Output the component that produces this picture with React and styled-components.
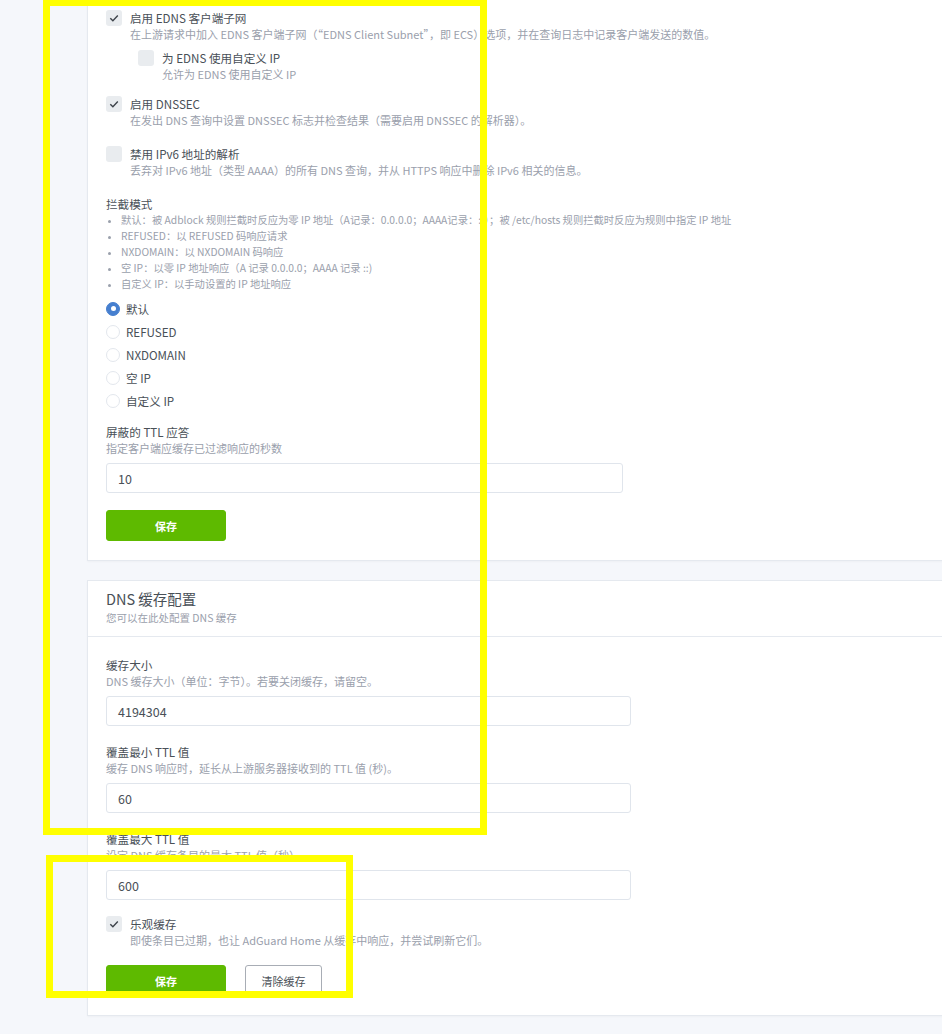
import React from 'react';
import styled, { createGlobalStyle } from 'styled-components';

const GlobalStyle = createGlobalStyle`
  html, body {
    margin: 0;
    padding: 0;
    background: #f5f7fb;
    overflow: hidden;
  }
  body {
    font-family: "Noto Sans CJK SC", "Open Sans", sans-serif;
    color: #495057;
  }
  * { box-sizing: border-box; }
`;

const Page = styled.div`
  position: relative;
  padding-left: 87px;
  min-height: 1034px;
`;

const Card = styled.div`
  background: #fff;
  border: 1px solid rgba(0, 40, 100, 0.1);
  border-right: none;
  border-top: ${props => (props.cut ? 'none' : '1px solid rgba(0, 40, 100, 0.1)')};
  margin-right: -20px;
  margin-top: ${props => props.mt || 0}px;
  box-shadow: 0 1px 2px rgba(0, 0, 0, 0.03);
`;

const CardHeader = styled.div`
  padding: 8px 18px 10px;
  border-bottom: 1px solid rgba(0, 40, 100, 0.1);
`;

const CardTitle = styled.div`
  font-size: 14.5px;
  line-height: 20px;
  color: #495057;
`;

const CardSubtitle = styled.div`
  margin-top: 1px;
  font-size: 10.5px;
  line-height: 16px;
  color: #9aa0ac;
`;

const CardBody = styled.div`
  padding: ${props => props.pt}px 18px 19px;
`;

const CheckGroup = styled.div`
  display: flex;
  align-items: flex-start;
  gap: 8px;
  margin-left: ${props => props.indent || 0}px;
  margin-bottom: ${props => props.mb || 0}px;
`;

const CheckBox = styled.span`
  flex: none;
  width: 16px;
  height: 16px;
  border-radius: 3px;
  background: #e9ecef;
  display: flex;
  align-items: center;
  justify-content: center;
`;

const CheckText = styled.div`
  display: flex;
  flex-direction: column;
`;

const Label = styled.div`
  font-size: 11.6px;
  line-height: 16px;
  color: #495057;
  margin-top: ${props => props.mt || 0}px;
`;

const Desc = styled.div`
  font-size: 11px;
  line-height: 16px;
  color: #9aa0ac;
  white-space: nowrap;
`;

const ModeList = styled.ul`
  margin: 0;
  padding: 0 0 0 15px;
  list-style: disc;
  font-size: 10.3px;
  line-height: 16px;
  color: #9aa0ac;
  white-space: nowrap;

  li::marker {
    font-size: 9px;
  }
`;

const RadioList = styled.div`
  margin-top: 5px;
  display: flex;
  flex-direction: column;
`;

const RadioRow = styled.div`
  display: flex;
  align-items: center;
  gap: 6px;
  height: 23px;
  font-size: 11.6px;
  color: #495057;
`;

const RadioDot = styled.span`
  width: 14px;
  height: 14px;
  border-radius: 50%;
  border: 1px solid ${props => (props.checked ? '#467fcf' : '#e3e7ed')};
  background: ${props => (props.checked ? '#467fcf' : '#fff')};
  display: flex;
  align-items: center;
  justify-content: center;

  &::after {
    content: '';
    display: ${props => (props.checked ? 'block' : 'none')};
    width: 5px;
    height: 5px;
    border-radius: 50%;
    background: #fff;
  }
`;

const Input = styled.div`
  width: ${props => props.w}px;
  height: 30px;
  margin-top: 7px;
  border: 1px solid #e0e5ec;
  border-radius: 3px;
  padding: 0 11px;
  display: flex;
  align-items: center;
  font-size: 12.5px;
  color: #495057;
`;

const Field = styled.div`
  margin-bottom: ${props => props.mb || 0}px;
`;

const Buttons = styled.div`
  display: flex;
  gap: 19px;
  margin-top: 17px;
`;

const Button = styled.button`
  height: 31px;
  width: ${props => props.w}px;
  border-radius: 3px;
  font-family: inherit;
  font-size: 11px;
  font-weight: ${props => (props.primary ? 700 : 400)};
  color: ${props => (props.primary ? '#fff' : '#495057')};
  background: ${props => (props.primary ? '#5eba00' : '#fff')};
  border: 1px solid ${props => (props.primary ? '#5eba00' : '#a8adb5')};
  padding: 0;
`;

const Highlight = styled.div`
  position: absolute;
  border: 7px solid #ffff00;
  pointer-events: none;
`;

const Check = ({ checked }) => (
  <CheckBox>
    {checked && (
      <svg width="12" height="12" viewBox="0 0 12 12">
        <polyline points="2.3,6.2 4.9,8.8 9.8,3.6" fill="none" stroke="#3d434a" strokeWidth="1.4" />
      </svg>
    )}
  </CheckBox>
);

const CheckItem = ({ checked, label, desc, indent, mb }) => (
  <CheckGroup indent={indent} mb={mb}>
    <Check checked={checked} />
    <CheckText>
      <Label>{label}</Label>
      <Desc>{desc}</Desc>
    </CheckText>
  </CheckGroup>
);

const modes = [
  '默认：被 Adblock 规则拦截时反应为零 IP 地址（A记录：0.0.0.0；AAAA记录：::）；被 /etc/hosts 规则拦截时反应为规则中指定 IP 地址',
  'REFUSED：以 REFUSED 码响应请求',
  'NXDOMAIN：以 NXDOMAIN 码响应',
  '空 IP：以零 IP 地址响应（A 记录 0.0.0.0；AAAA 记录 ::)',
  '自定义 IP：以手动设置的 IP 地址响应',
];

const radios = ['默认', 'REFUSED', 'NXDOMAIN', '空 IP', '自定义 IP'];

export default function App() {
  return (
    <>
      <GlobalStyle />
      <Page>
        <Card cut>
          <CardBody pt={10}>
            <CheckItem
              checked
              mb={8}
              label="启用 EDNS 客户端子网"
              desc="在上游请求中加入 EDNS 客户端子网（“EDNS Client Subnet”，即 ECS）选项，并在查询日志中记录客户端发送的数值。"
            />
            <CheckItem
              indent={32}
              mb={14}
              label="为 EDNS 使用自定义 IP"
              desc="允许为 EDNS 使用自定义 IP"
            />
            <CheckItem
              checked
              mb={18}
              label="启用 DNSSEC"
              desc="在发出 DNS 查询中设置 DNSSEC 标志并检查结果（需要启用 DNSSEC 的解析器）。"
            />
            <CheckItem
              mb={18}
              label="禁用 IPv6 地址的解析"
              desc="丢弃对 IPv6 地址（类型 AAAA）的所有 DNS 查询，并从 HTTPS 响应中删除 IPv6 相关的信息。"
            />
            <Label>拦截模式</Label>
            <ModeList>
              {modes.map(m => (
                <li key={m}>{m}</li>
              ))}
            </ModeList>
            <RadioList>
              {radios.map((r, i) => (
                <RadioRow key={r}>
                  <RadioDot checked={i === 0} />
                  {r}
                </RadioRow>
              ))}
            </RadioList>
            <Label mt={12}>屏蔽的 TTL 应答</Label>
            <Desc>指定客户端应缓存已过滤响应的秒数</Desc>
            <Input w={517}>10</Input>
            <Buttons>
              <Button primary w={120}>保存</Button>
            </Buttons>
          </CardBody>
        </Card>

        <Card mt={19}>
          <CardHeader>
            <CardTitle>DNS 缓存配置</CardTitle>
            <CardSubtitle>您可以在此处配置 DNS 缓存</CardSubtitle>
          </CardHeader>
          <CardBody pt={20}>
            <Field mb={18}>
              <Label>缓存大小</Label>
              <Desc>DNS 缓存大小（单位：字节）。若要关闭缓存，请留空。</Desc>
              <Input w={525}>4194304</Input>
            </Field>
            <Field mb={18}>
              <Label>覆盖最小 TTL 值</Label>
              <Desc>缓存 DNS 响应时，延长从上游服务器接收到的 TTL 值 (秒)。</Desc>
              <Input w={525}>60</Input>
            </Field>
            <Field mb={16}>
              <Label>覆盖最大 TTL 值</Label>
              <Desc>设定 DNS 缓存条目的最大 TTL 值（秒）</Desc>
              <Input w={525}>600</Input>
            </Field>
            <CheckItem
              checked
              label="乐观缓存"
              desc="即使条目已过期，也让 AdGuard Home 从缓存中响应，并尝试刷新它们。"
            />
            <Buttons>
              <Button primary w={120}>保存</Button>
              <Button w={77}>清除缓存</Button>
            </Buttons>
          </CardBody>
        </Card>

        <Highlight style={{ left: 43, top: -1, width: 444, height: 836 }} />
        <Highlight style={{ left: 46, top: 855, width: 307, height: 143 }} />
      </Page>
    </>
  );
}
